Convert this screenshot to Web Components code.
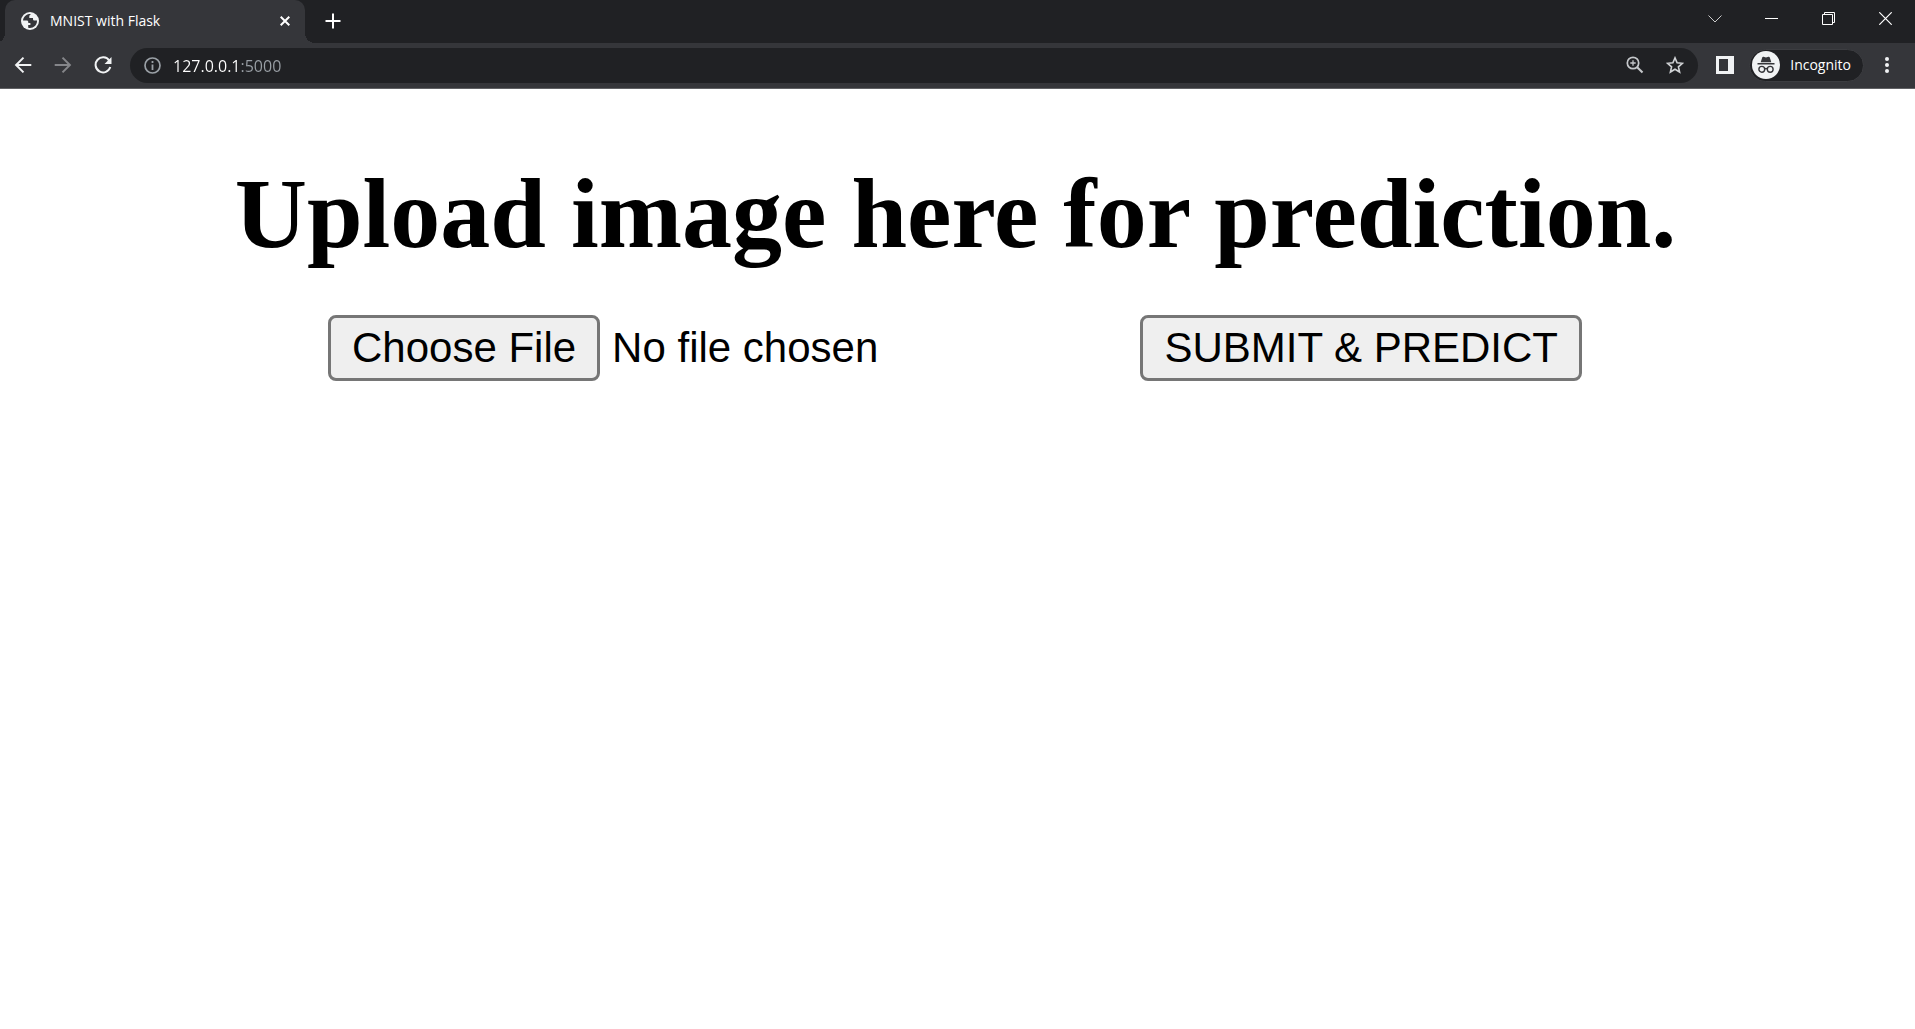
<!DOCTYPE html>
<html lang="en">
<head>
<meta charset="utf-8">
<title>MNIST with Flask</title>
<style>
  html, body { margin: 0; min-height: 100%; background: #fff; }
</style>
</head>
<body>
<browser-window></browser-window>
<script>
const base = `
  * { box-sizing: border-box; }
  svg { display: block; flex: none; }
  button { all: unset; box-sizing: border-box; display: grid; place-items: center; flex: none; cursor: pointer; }
`;
class Base extends HTMLElement {
  connectedCallback() {
    if (this.shadowRoot) return;
    const t = document.createElement('template');
    t.innerHTML = `<style>${base}${this.constructor.css}</style>${this.constructor.html}`;
    this.attachShadow({ mode: 'open' }).append(t.content.cloneNode(true));
  }
}

customElements.define('browser-tab', class extends Base {
  static css = `
    :host { position: relative; box-sizing: border-box; display: flex; align-items: center; width: 300px; height: 43px; padding: 0 10px 2px 16px;
      background: #35363a; color: #fff; border-radius: 10px 10px 0 0; font: 14px/20px "Open Sans", "Noto Sans", sans-serif; }
    :host::before, :host::after { content: ""; position: absolute; bottom: 0; width: 10px; height: 10px; }
    :host::before { right: 100%; background: radial-gradient(circle at 0 0, transparent 10px, #35363a 10px); }
    :host::after { left: 100%; background: radial-gradient(circle at 100% 0, transparent 10px, #35363a 10px); }
    span { flex: 1; padding-left: 11px; white-space: nowrap; }
    button { width: 20px; height: 20px; }
  `;
  static html = `
    <svg width="18" height="18" viewBox="0 0 18 18"><circle cx="9" cy="9" r="9" fill="#f1f3f4"/><path d="M8.200 2C4.900 2.400 2.200 5.300 2 8.600h3.700c1 0 1.600.6 1.600 1.500v.8h2.100v2H7.200v2.900c4.600 1 8.800-2.200 8.800-6.800v-.4h-2.300c-1 0-1.700-.7-1.700-1.700V6.100H8.300V4.200c0-.9.600-1.300 1.200-1.500V2z" fill="#35363a"/></svg>
    <span><slot></slot></span>
    <button aria-label="Close tab"><svg width="10" height="10" viewBox="0 0 10 10"><path d="M.7.7l8.600 8.600M9.300.7L.7 9.300" stroke="#fff" stroke-width="2"/></svg></button>`;
});

customElements.define('tab-strip', class extends Base {
  static css = `
    :host { display: flex; height: 43px; padding-left: 5px; background: #202124; }
    .new { width: 30px; height: 42px; margin-left: 13px; }
    .controls { display: flex; margin: 0 1px 0 auto; }
    .controls button { width: 57px; height: 37px; }
  `;
  static html = `
    <browser-tab>MNIST with Flask</browser-tab>
    <button class="new" aria-label="New tab"><svg width="16" height="16" viewBox="0 0 16 16"><path d="M8 .5v15M.5 8h15" stroke="#fff" stroke-width="2"/></svg></button>
    <div class="controls">
      <button aria-label="Search tabs"><svg width="14" height="8" viewBox="0 0 14 8"><path d="M.5.5L7 7L13.500.5" fill="none" stroke="#ccc"/></svg></button>
      <button aria-label="Minimize"><svg width="13" height="13" viewBox="0 0 13 13"><path d="M0 6.500h13" stroke="#fff"/></svg></button>
      <button aria-label="Restore"><svg width="13" height="13" viewBox="0 0 13 13"><path d="M.5 2.500h10v10H.5zM2.500 2.500v-2h10v10h-2" fill="none" stroke="#fff"/></svg></button>
      <button aria-label="Close"><svg width="13" height="13" viewBox="0 0 13 13"><path d="M.3.3l12.400 12.400M12.700.3L.3 12.700" stroke="#fff" stroke-width="1.200"/></svg></button>
    </div>`;
});

customElements.define('address-bar', class extends Base {
  static css = `
    :host { box-sizing: border-box; display: flex; align-items: center; flex: 1; height: 35px; padding: 0 14px; border-radius: 18px; background: #202124; }
    label { display: flex; align-items: center; flex: 1; min-width: 0; }
    input { flex: 1; min-width: 0; height: 28px; margin-left: 12px; padding: 2px 0 0; border: 0; outline: 0;
      font: 16px/24px "Open Sans", "Noto Sans", sans-serif; color: transparent; caret-color: #fff;
      background: linear-gradient(90deg, #fff 66px, #9aa0a6 66px); -webkit-background-clip: text; background-clip: text; }
    .tools { display: flex; gap: 22px; }
    .tools button { width: 18px; height: 18px; }
  `;
  static html = `
    <label><svg width="17" height="17" viewBox="0 0 17 17"><circle cx="8.500" cy="8.500" r="7.500" fill="none" stroke="#9aa0a6" stroke-width="1.700"/><path d="M8.500 7.500V13M8.500 4v2" stroke="#9aa0a6" stroke-width="1.800"/></svg>
    <input aria-label="Address" spellcheck="false" value="127.0.0.1:5000"></label>
    <div class="tools">
      <button aria-label="Zoom"><svg width="18" height="18" viewBox="0 0 18 18" fill="none" stroke="#c4c7ca"><circle cx="7" cy="7" r="5.700" stroke-width="1.700"/><path d="M11.200 11.200L16.500 16.500" stroke-width="2.100"/><path d="M7 4.300v5.400M4.300 7h5.400" stroke-width="1.300"/></svg></button>
      <button aria-label="Bookmark"><svg width="18" height="18" viewBox="0 0 18 18"><path d="M9 1.900l2.100 4.900 5.300.5-4 3.500 1.200 5.200L9 13.300 4.400 16l1.200-5.200-4-3.500 5.300-.5z" fill="none" stroke="#d0d2d5" stroke-width="1.600"/></svg></button>
    </div>`;
});

customElements.define('browser-toolbar', class extends Base {
  static css = `
    :host { box-sizing: border-box; display: flex; align-items: center; height: 46px; padding: 0 19px 1px 14px; background: #35363a; border-bottom: 1px solid #606164; }
    .nav { display: flex; gap: 22px; margin-right: 18px; }
    .nav button, .panel { width: 18px; height: 18px; }
    .panel { margin: 0 15px 0 18px; }
    .profile { display: flex; align-items: center; gap: 10px; height: 33px; padding: 0 12px 0 2px; border: 1px solid #3c3d41; border-radius: 17px;
      background: #202124; color: #fff; font: 14px/20px "Open Sans", "Noto Sans", sans-serif; }
    .menu { width: 18px; height: 18px; margin-left: 14px; }
  `;
  static html = `
    <div class="nav">
      <button aria-label="Back"><svg width="18" height="18" viewBox="0 0 18 18"><path d="M17.300 9H2.500M9.500 1.600L2.100 9l7.400 7.400" fill="none" stroke="#f1f3f4" stroke-width="2"/></svg></button>
      <button aria-label="Forward"><svg width="18" height="18" viewBox="0 0 18 18"><path d="M.7 9h14.800M8.500 1.600L15.900 9l-7.400 7.400" fill="none" stroke="#85868a" stroke-width="2"/></svg></button>
      <button aria-label="Reload"><svg width="18" height="18" viewBox="0 0 18 18"><path d="M15.300 4.600A7.500 7.500 0 1 0 16.300 11" fill="none" stroke="#f1f3f4" stroke-width="2"/><path d="M17.500 1v7h-7z" fill="#f1f3f4"/></svg></button>
    </div>
    <address-bar></address-bar>
    <button class="panel" aria-label="Side panel"><svg width="18" height="18" viewBox="0 0 18 18"><path fill="#f1f3f4" fill-rule="evenodd" d="M0 0h18v18H0zM3 3v12h9V3z"/></svg></button>
    <button class="profile"><svg width="28" height="28" viewBox="0 0 28 28"><circle cx="14" cy="14" r="14" fill="#f1f3f4"/><path d="M10.200 6.400c.2-.7.800-.9 1.400-.7l2.400.7 2.400-.7c.6-.2 1.200 0 1.400.7l1.500 4.800H8.700zM5.500 12h17v1.500h-17z" fill="#35363a"/><g fill="none" stroke="#35363a" stroke-width="1.400"><circle cx="9.800" cy="18.300" r="2.900"/><circle cx="18.200" cy="18.300" r="2.900"/><path d="M12.700 18c.8-.6 1.800-.6 2.600 0"/></g></svg>Incognito</button>
    <button class="menu" aria-label="Menu"><svg width="4" height="18" viewBox="0 0 4 18" fill="#f1f3f4"><circle cx="2" cy="3" r="2"/><circle cx="2" cy="9" r="2"/><circle cx="2" cy="15" r="2"/></svg></button>`;
});

customElements.define('upload-page', class extends Base {
  static css = `
    :host { display: block; padding: 67px 4px 0 0; color: #000; }
    h1 { margin: 0; font: bold 100px/116px "Liberation Serif", serif; text-align: center; }
    form { display: flex; justify-content: space-between; margin: 43px 0 0; padding: 0 329px 0 328px; font: 42px/48px "Liberation Sans", sans-serif; }
    input { width: 600px; font: inherit; color: #000; }
    input::file-selector-button, form button { box-sizing: border-box; height: 66px; margin: 0; padding: 0 21px; border: 3px solid #767676; border-radius: 8px;
      background: #efefef; color: #000; font: inherit; }
    input::file-selector-button { margin-right: 12px; }
  `;
  static html = `
    <h1>Upload image here for prediction.</h1>
    <form onsubmit="return false">
      <input type="file" aria-label="Image file">
      <button type="submit">SUBMIT &amp; PREDICT</button>
    </form>`;
});

customElements.define('browser-window', class extends Base {
  static css = `:host { display: flex; flex-direction: column; } upload-page { flex: 1; }`;
  static html = `<tab-strip></tab-strip><browser-toolbar></browser-toolbar><upload-page></upload-page>`;
});
</script>
</body>
</html>
